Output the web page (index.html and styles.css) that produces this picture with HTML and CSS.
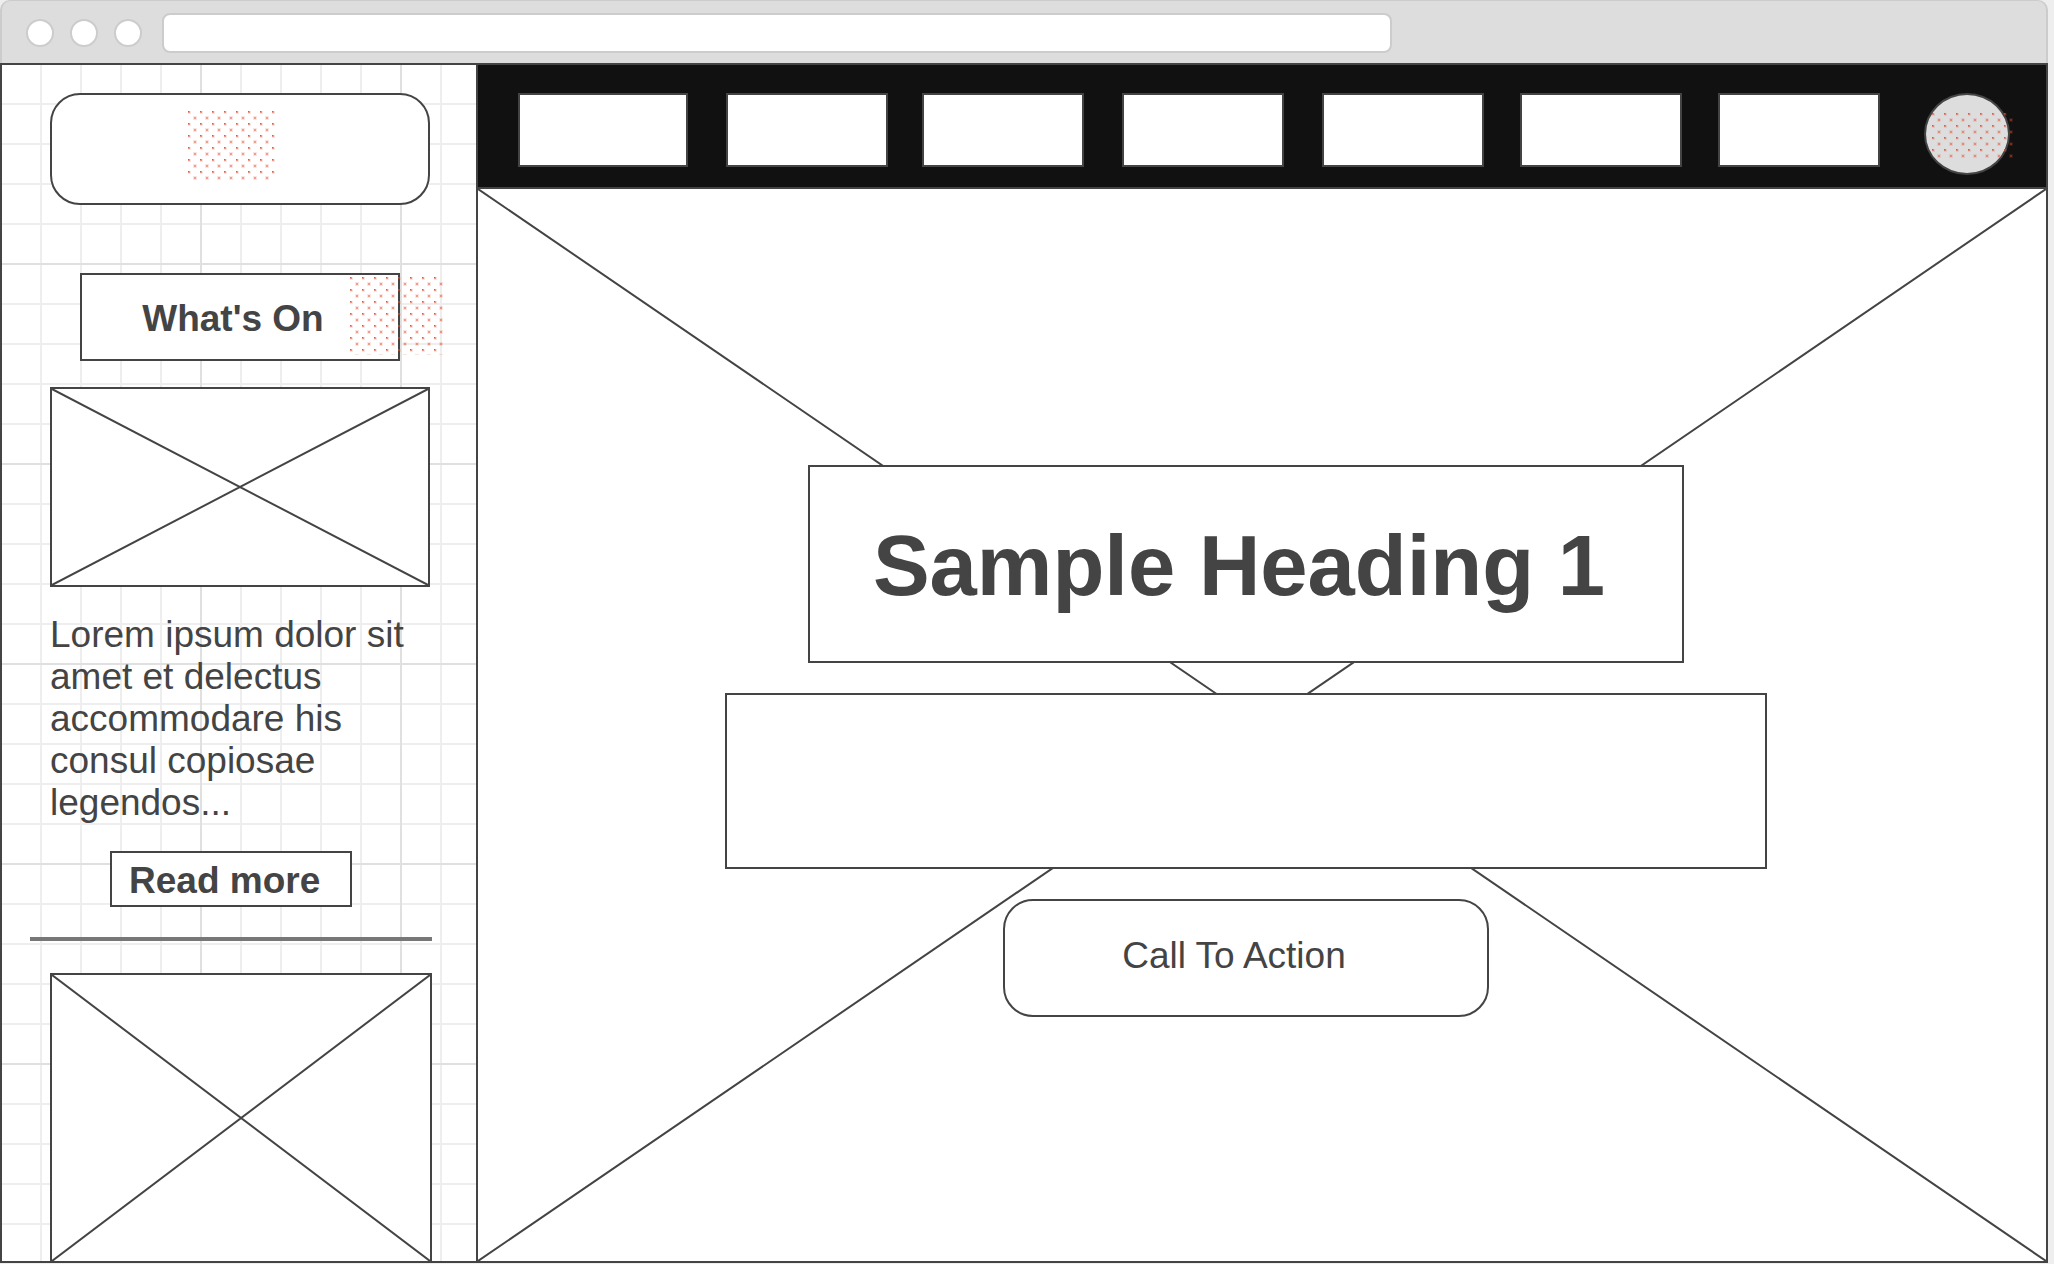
FILE: index.html
```html
<!DOCTYPE html>
<html lang="en">
<head>
<meta charset="utf-8">
<meta name="viewport" content="width=device-width, initial-scale=1">
<title>What's On</title>
<link rel="stylesheet" href="styles.css">
</head>
<body>
<svg class="defs" aria-hidden="true">
  <defs>
    <pattern id="dots" width="12" height="12" patternUnits="userSpaceOnUse">
      <g fill="#e2452c">
        <rect width="3" height="3" opacity=".15"/>
        <rect width="2" height="2" opacity=".5"/>
        <rect width="1" height="1" opacity=".8"/>
        <rect x="5" y="5" width="4" height="4" opacity=".14"/>
        <rect x="6" y="6" width="2" height="2" opacity=".45"/>
      </g>
    </pattern>
  </defs>
</svg>

<div class="browser">
  <div class="toolbar">
    <div class="lights"><span class="light"></span><span class="light"></span><span class="light"></span></div>
    <input class="address" type="text" aria-label="Address">
  </div>

  <div class="page">
    <aside class="sidebar">
      <div class="logo"><svg class="logo-dots" aria-hidden="true"><rect width="100%" height="100%" fill="url(#dots)"/></svg></div>
      <div class="title">
        <h2 class="title-text">What's On</h2>
        <svg class="title-dots" aria-hidden="true"><rect width="100%" height="100%" fill="url(#dots)"/></svg>
      </div>
      <div class="picture">
        <svg class="cross" viewBox="0 0 100 100" preserveAspectRatio="none" aria-hidden="true"><path d="M0 0L100 100M100 0L0 100"/></svg>
      </div>
      <p class="excerpt">Lorem ipsum dolor sit amet et delectus accommodare his consul copiosae legendos...</p>
      <button class="more" type="button">Read more</button>
      <hr class="rule">
      <div class="picture picture-next">
        <svg class="cross" viewBox="0 0 100 100" preserveAspectRatio="none" aria-hidden="true"><path d="M0 0L100 100M100 0L0 100"/></svg>
      </div>
    </aside>

    <div class="content">
      <nav class="nav" aria-label="Main">
        <button class="tab tab-first" type="button" aria-label="Tab 1"></button>
        <button class="tab" type="button" aria-label="Tab 2"></button>
        <button class="tab" type="button" aria-label="Tab 3"></button>
        <button class="tab" type="button" aria-label="Tab 4"></button>
        <button class="tab" type="button" aria-label="Tab 5"></button>
        <button class="tab" type="button" aria-label="Tab 6"></button>
        <button class="tab" type="button" aria-label="Tab 7"></button>
        <button class="avatar" type="button" aria-label="Account"><svg class="avatar-dots" aria-hidden="true"><rect width="100%" height="100%" fill="url(#dots)"/></svg></button>
      </nav>
      <main class="hero">
        <svg class="cross" viewBox="0 0 100 100" preserveAspectRatio="none" aria-hidden="true"><path d="M0 0L100 100M100 0L0 100"/></svg>
        <h1 class="heading">Sample Heading 1</h1>
        <div class="panel"></div>
        <button class="cta" type="button">Call To Action</button>
      </main>
    </div>
  </div>
</div>
</body>
</html>
```
FILE: styles.css
```css
:root {
  --ink: #444;
  --line: 2px solid var(--ink);
}

* {
  box-sizing: border-box;
}

body {
  margin: 0;
  padding: 0 6px 1px 0;
  background: #eee;
  color: var(--ink);
  font-family: "Liberation Sans", Arial, sans-serif;
  font-size: 37px;
  line-height: 42px;
}

button {
  padding: 0;
  color: inherit;
  font: inherit;
  border: var(--line);
  border-radius: 0;
  background: #fff;
}

.defs {
  position: absolute;
  width: 0;
  height: 0;
}

/* Browser toolbar */
.toolbar {
  display: flex;
  gap: 20px;
  padding: 12px 24px 10px;
  border: 2px solid #ccc;
  border-width: 1px 2px 0;
  border-radius: 10px 10px 0 0;
  background: #ddd;
}

.lights {
  display: flex;
  align-items: center;
  gap: 16px;
}

.light {
  width: 28px;
  height: 28px;
  border: 2px solid #ccc;
  border-radius: 50%;
  background: #fff;
}

.address {
  flex: 0 1 1230px;
  min-width: 0;
  height: 40px;
  padding: 0 12px;
  border: 2px solid #ccc;
  border-radius: 8px;
  background: #fff;
  font: inherit;
  font-size: 24px;
}

.page {
  display: flex;
  border: var(--line);
  background: #fff;
}

/* Sidebar on graph paper */
.sidebar {
  display: flex;
  flex-direction: column;
  align-items: flex-start;
  flex: none;
  width: 476px;
  padding: 28px 44px 0 48px;
  border-right: var(--line);
  background-color: #fff;
  background-image:
    linear-gradient(90deg, #e0e0e0 2px, transparent 2px),
    linear-gradient(#e0e0e0 2px, transparent 2px),
    linear-gradient(90deg, #eee 2px, transparent 2px),
    linear-gradient(#eee 2px, transparent 2px);
  background-size: 200px 200px, 200px 200px, 40px 40px, 40px 40px;
  background-position: 198px 198px, 198px 198px, 38px 38px, 38px 38px;
}

.logo {
  width: 380px;
  height: 112px;
  padding: 16px 136px;
  border: var(--line);
  border-radius: 30px;
  background: #fff;
}

.logo-dots {
  display: block;
  width: 88px;
  height: 70px;
}

.title {
  position: relative;
  display: flex;
  align-items: center;
  justify-content: center;
  width: 320px;
  height: 88px;
  margin: 68px 0 26px 30px;
  padding: 4px 14px 0 0;
  border: var(--line);
  background: #fff;
}

.title-text {
  margin: 0;
  font-size: inherit;
}

.title-dots {
  position: absolute;
  top: 2px;
  left: 268px;
  width: 93px;
  height: 78px;
}

.picture {
  position: relative;
  width: 380px;
  height: 200px;
  border: var(--line);
  background: #fff;
}

.picture-next {
  width: 382px;
  height: 288px;
  border-bottom: 0;
}

.cross {
  position: absolute;
  inset: 0;
  width: 100%;
  height: 100%;
  fill: none;
  stroke: var(--ink);
  stroke-width: 2;
}

.cross path {
  vector-effect: non-scaling-stroke;
}

.excerpt {
  margin: 27px 0;
}

.more {
  width: 242px;
  height: 56px;
  margin-left: 60px;
  padding: 4px 0 0 17px;
  font-weight: bold;
  text-align: left;
}

.rule {
  width: 402px;
  height: 4px;
  margin: 30px 0 32px -20px;
  border: 0;
  background: #777;
}

/* Main column */
.content {
  display: flex;
  flex-direction: column;
  flex: 1;
  min-width: 0;
}

.nav {
  display: grid;
  grid-template-columns: 174fr 162fr 166fr 166fr 164fr 164fr 172fr 86fr;
  gap: 34px;
  height: 124px;
  padding: 28px 36px 0 40px;
  border-bottom: var(--line);
  background: #111;
}

.tab {
  width: 100%;
  max-width: 162px;
  height: 74px;
}

.tab-first {
  max-width: 170px;
}

.avatar {
  position: relative;
  width: 86px;
  height: 82px;
  border-radius: 50%;
  background: #ddd;
}

.avatar-dots {
  position: absolute;
  top: 18px;
  left: 6px;
  width: 82px;
  height: 46px;
}

.hero {
  position: relative;
  display: flex;
  flex-direction: column;
  align-items: center;
  gap: 30px;
  flex: 1;
  padding: 276px 32px 244px 0;
}

.heading,
.panel,
.cta {
  position: relative;
  max-width: 100%;
  border: var(--line);
  background: #fff;
}

.heading {
  display: flex;
  align-items: center;
  justify-content: center;
  width: 876px;
  height: 198px;
  margin: 0;
  padding: 4px 14px 0 0;
  font-size: 85px;
  line-height: 96px;
}

.panel {
  width: 1042px;
  height: 176px;
}

.cta {
  width: 486px;
  height: 118px;
  padding: 0 24px 4px 0;
  border-radius: 30px;
}
```
